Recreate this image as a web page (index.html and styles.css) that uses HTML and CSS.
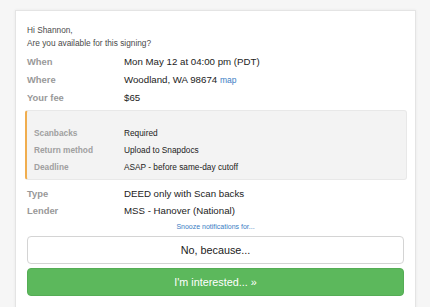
FILE: index.html
```html
<!DOCTYPE html>
<html lang="en">
<head>
  <meta charset="UTF-8" />
  <meta name="viewport" content="width=device-width, initial-scale=1.0"/>
  <title>Signing request</title>
  <link rel="stylesheet" href="styles.css">
</head>
<body>

  <!-- Signing offer card -->
  <div class="offer-card">
    <div class="greeting">
      <div>Hi Shannon,</div>
      <div>Are you available for this signing?</div>
    </div>

    <div class="details">
      <div class="row"><span class="label">When</span><span class="value">Mon May 12 at 04:00 pm (PDT)</span></div>
      <div class="row"><span class="label">Where</span><span class="value">Woodland, WA 98674 <a href="#" class="map-link">map</a></span></div>
      <div class="row"><span class="label">Your fee</span><span class="value">$65</span></div>
    </div>

    <!-- Requirements box -->
    <div class="notice">
      <div class="row"><span class="label">Scanbacks</span><span class="value">Required</span></div>
      <div class="row"><span class="label">Return method</span><span class="value">Upload to Snapdocs</span></div>
      <div class="row"><span class="label">Deadline</span><span class="value">ASAP - before same-day cutoff</span></div>
    </div>

    <div class="details lower">
      <div class="row"><span class="label">Type</span><span class="value">DEED only with Scan backs</span></div>
      <div class="row"><span class="label">Lender</span><span class="value">MSS - Hanover (National)</span></div>
    </div>

    <div class="snooze"><a href="#">Snooze notifications for...</a></div>

    <div class="actions">
      <button class="btn btn-decline">No, because...</button>
      <button class="btn btn-accept">I'm interested... &raquo;</button>
    </div>
  </div>

</body>
</html>
```

FILE: styles.css
```css
  * {
    box-sizing: border-box;
  }

  body {
    margin: 0;
    background-color: #f6f6f6;
    font-family: "Liberation Sans", Arial, sans-serif;
    color: #222;
  }

  .offer-card {
    margin: 10px 0 0 15px;
    width: 401px;
    height: 320px;
    background: #fff;
    border: 1px solid #e4e4e4;
    box-shadow: 0 0 3px rgba(0, 0, 0, 0.06);
    padding: 13px 11px 0 11px;
  }

  .greeting {
    font-size: 8.3px;
    line-height: 13px;
    color: #4a4a4a;
  }

  .details {
    margin-top: 3px;
    font-size: 9.7px;
    line-height: 18px;
  }

  .details .row {
    display: flex;
  }

  .details .label {
    width: 97px;
    flex-shrink: 0;
    color: #999;
    font-weight: bold;
    font-size: 9.4px;
  }

  .map-link {
    color: #3b7dc4;
    text-decoration: none;
    font-size: 8.5px;
  }

  /* Requirements */
  .notice {
    margin: 3px -3px 0 -2px;
    padding: 14px 0 3px 7px;
    background-color: #f3f3f3;
    border: 1px solid #e8e8e8;
    border-left: 2px solid #f0ad4e;
    border-radius: 3px;
    font-size: 8.3px;
    line-height: 17px;
  }

  .notice .row {
    display: flex;
  }

  .notice .label {
    width: 90px;
    flex-shrink: 0;
    color: #a0a0a0;
    font-weight: bold;
  }

  .details.lower {
    margin-top: 5px;
    line-height: 17px;
  }

  .snooze {
    text-align: center;
    font-size: 7px;
    margin-top: 3px;
    line-height: 9px;
  }

  .snooze a {
    color: #3b7dc4;
    text-decoration: none;
  }

  .actions {
    margin-top: 5px;
    display: flex;
    flex-direction: column;
    gap: 4px;
  }

  .btn {
    width: 100%;
    height: 28px;
    border-radius: 4px;
    font-family: "Liberation Sans", Arial, sans-serif;
    font-size: 10.8px;
    cursor: pointer;
  }

  .btn-decline {
    background: #fff;
    border: 1px solid #d4d4d4;
    color: #222;
  }

  .btn-accept {
    background: #5cb85c;
    border: 1px solid #55ad55;
    color: #fff;
  }
```
